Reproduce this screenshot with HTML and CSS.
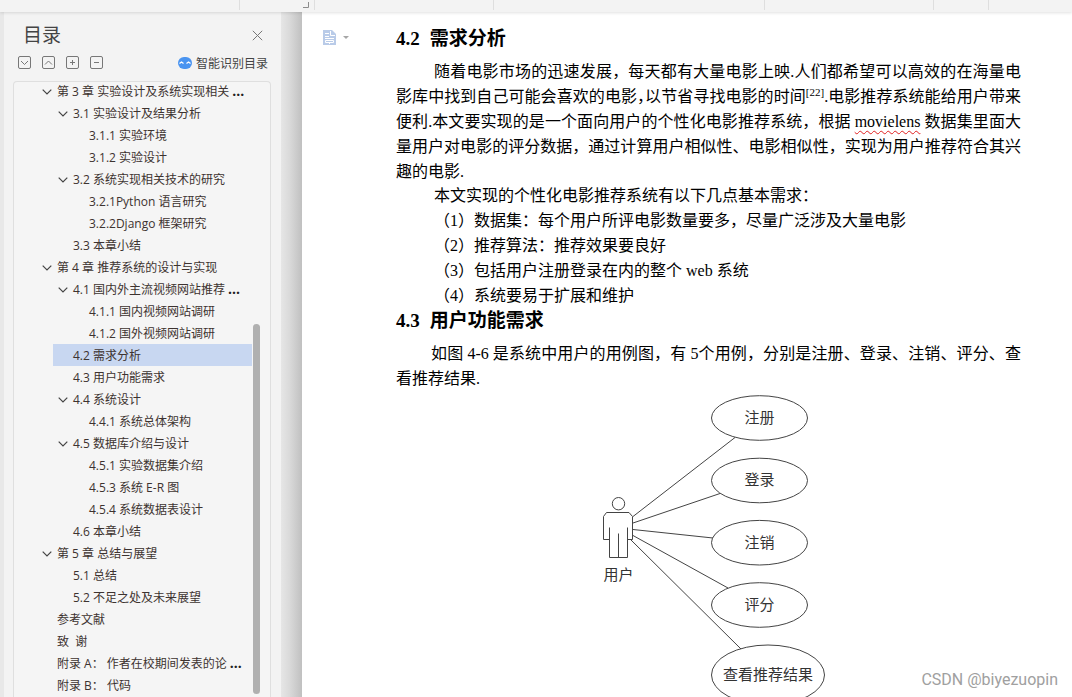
FILE: index.html
```html
<!DOCTYPE html>
<html lang="zh-CN">
<head>
<meta charset="utf-8">
<title>目录</title>
<link rel="stylesheet" href="styles.css">
</head>
<body>
<div class="app">
  <header class="topbar">
    <span class="seg seg-a"></span>
    <span class="seg seg-b"><svg width="7" height="7" viewBox="0 0 7 7"><path d="M5.5 0v5.5H0" fill="none" stroke="#8c8c8c"/></svg></span>
    <span class="seg seg-c"></span>
    <span class="seg seg-d"></span>
    <span class="seg seg-e"></span>
    <span class="seg seg-f"></span>
  </header>
  <div class="body">
    <aside class="sidebar">
      <div class="side-head">
        <h1 class="side-title">目录</h1>
        <button class="icon-btn" aria-label="关闭"><svg width="11" height="11" viewBox="0 0 11 11"><path d="M.8.8l9.4 9.4M10.2.8L.8 10.2" stroke="#777" fill="none"/></svg></button>
      </div>
      <div class="tools">
        <button class="icon-btn" aria-label="展开"><svg width="14" height="14" viewBox="0 0 14 14"><rect x=".5" y=".5" width="12" height="12" rx="1.5"/><path d="M3 5l3.500 3.500L10 5"/></svg></button>
        <button class="icon-btn" aria-label="收起"><svg width="14" height="14" viewBox="0 0 14 14"><rect x=".5" y=".5" width="12" height="12" rx="1.5"/><path d="M3 8.500L6.500 5 10 8.500"/></svg></button>
        <button class="icon-btn" aria-label="增加"><svg width="14" height="14" viewBox="0 0 14 14"><rect x=".5" y=".5" width="12" height="12" rx="1.5"/><path d="M4 6.5h5M6.5 4v5"/></svg></button>
        <button class="icon-btn" aria-label="减少"><svg width="14" height="14" viewBox="0 0 14 14"><rect x=".5" y=".5" width="12" height="12" rx="1.5"/><path d="M4 6.5h5"/></svg></button>
        <button class="smart"><svg width="14" height="12" viewBox="0 0 14 12"><rect width="14" height="12" rx="6" fill="#4a94f0"/><path d="M1.500 6.500L3.500 5 5.500 6.500M8.500 6.500l2-1.500 2 1.500" fill="none" stroke="#fff" stroke-width="1.300"/></svg><span class="smart-text">智能识别目录</span></button>
      </div>
      <nav class="tree">
        <ul class="list">
          <li class="row l1"><button class="fold" aria-label="折叠"><svg width="10" height="6" viewBox="0 0 10 6"><path d="M.7.7L5 5 9.300.7"/></svg></button><a href="#">第 3 章 实验设计及系统实现相关<b class="dots">...</b></a></li>
          <li class="row l2"><button class="fold" aria-label="折叠"><svg width="10" height="6" viewBox="0 0 10 6"><path d="M.7.7L5 5 9.300.7"/></svg></button><a href="#">3.1 实验设计及结果分析</a></li>
          <li class="row l3"><a href="#">3.1.1 实验环境</a></li>
          <li class="row l3"><a href="#">3.1.2 实验设计</a></li>
          <li class="row l2"><button class="fold" aria-label="折叠"><svg width="10" height="6" viewBox="0 0 10 6"><path d="M.7.7L5 5 9.300.7"/></svg></button><a href="#">3.2 系统实现相关技术的研究</a></li>
          <li class="row l3"><a href="#">3.2.1Python 语言研究</a></li>
          <li class="row l3"><a href="#">3.2.2Django 框架研究</a></li>
          <li class="row l2"><a href="#">3.3 本章小结</a></li>
          <li class="row l1"><button class="fold" aria-label="折叠"><svg width="10" height="6" viewBox="0 0 10 6"><path d="M.7.7L5 5 9.300.7"/></svg></button><a href="#">第 4 章 推荐系统的设计与实现</a></li>
          <li class="row l2"><button class="fold" aria-label="折叠"><svg width="10" height="6" viewBox="0 0 10 6"><path d="M.7.7L5 5 9.300.7"/></svg></button><a href="#">4.1 国内外主流视频网站推荐<b class="dots">...</b></a></li>
          <li class="row l3"><a href="#">4.1.1 国内视频网站调研</a></li>
          <li class="row l3"><a href="#">4.1.2 国外视频网站调研</a></li>
          <li class="row l2 selected"><a href="#">4.2 需求分析</a></li>
          <li class="row l2"><a href="#">4.3 用户功能需求</a></li>
          <li class="row l2"><button class="fold" aria-label="折叠"><svg width="10" height="6" viewBox="0 0 10 6"><path d="M.7.7L5 5 9.300.7"/></svg></button><a href="#">4.4 系统设计</a></li>
          <li class="row l3"><a href="#">4.4.1 系统总体架构</a></li>
          <li class="row l2"><button class="fold" aria-label="折叠"><svg width="10" height="6" viewBox="0 0 10 6"><path d="M.7.7L5 5 9.300.7"/></svg></button><a href="#">4.5 数据库介绍与设计</a></li>
          <li class="row l3"><a href="#">4.5.1 实验数据集介绍</a></li>
          <li class="row l3"><a href="#">4.5.3 系统 E-R 图</a></li>
          <li class="row l3"><a href="#">4.5.4 系统数据表设计</a></li>
          <li class="row l2"><a href="#">4.6 本章小结</a></li>
          <li class="row l1"><button class="fold" aria-label="折叠"><svg width="10" height="6" viewBox="0 0 10 6"><path d="M.7.7L5 5 9.300.7"/></svg></button><a href="#">第 5 章 总结与展望</a></li>
          <li class="row l2"><a href="#">5.1 总结</a></li>
          <li class="row l2"><a href="#">5.2 不足之处及未来展望</a></li>
          <li class="row l1"><a href="#">参考文献</a></li>
          <li class="row l1"><a href="#">致&nbsp; 谢</a></li>
          <li class="row l1"><a href="#">附录 A： 作者在校期间发表的论<b class="dots">...</b></a></li>
          <li class="row l1"><a href="#">附录 B： 代码</a></li>
        </ul>
        <div class="track"><div class="thumb"></div></div>
      </nav>
    </aside>
    <div class="edge"></div>
    <main class="page">
      <div class="gutter">
        <button class="icon-btn" aria-label="段落选项"><svg width="28" height="16" viewBox="0 0 28 16"><path d="M0 0h9l4 4v11H0z" fill="#b9cbe8"/><path d="M2 3.500h4M2 6.500h4M2 8.500h9M7.500 1v4.500H12M2.500 10.500h8v2h-8zM6.500 13v1" fill="none" stroke="#fff"/><path d="M20 6h6l-3 3z" fill="#a6a6a6"/></svg></button>
      </div>
      <article class="doc">
        <h2 class="head"><span class="num">4.2</span>需求分析</h2>
        <p class="para first">
          <span class="line full indent">随着电影市场的迅速发展，每天都有大量电影上映.人们都希望可以高效的在海量电</span>
          <span class="line full">影库中找到自己可能会喜欢的电影<span class="tight">，</span>以节省寻找电影的时间<sup class="cite">[22]</sup>.电影推荐系统能给用户带来</span>
          <span class="line full">便利.本文要实现的是一个面向用户的个性化电影推荐系统，根据 <span class="typo">movielens</span> 数据集里面大</span>
          <span class="line full">量用户对电影的评分数据，通过计算用户相似性、电影相似性，实现为用户推荐符合其兴</span>
          <span class="line">趣的电影.</span>
        </p>
        <p class="para">
          <span class="line indent">本文实现的个性化电影推荐系统有以下几点基本需求：</span>
          <span class="line indent">（1）数据集：每个用户所评电影数量要多，尽量广泛涉及大量电影</span>
          <span class="line indent">（2）推荐算法：推荐效果要良好</span>
          <span class="line indent">（3）包括用户注册登录在内的整个 web 系统</span>
          <span class="line indent">（4）系统要易于扩展和维护</span>
        </p>
        <h2 class="head"><span class="num">4.3</span>用户功能需求</h2>
        <p class="para">
          <span class="line full indent-s">如图 4-6 是系统中用户的用例图，有 5个用例，分别是注册、登录、注销、评分、查</span>
          <span class="line">看推荐结果.</span>
        </p>
        <figure class="figure">
          <svg class="usecase" width="226" height="320" viewBox="0 0 226 320">
            <g class="stroke">
              <ellipse cx="158.500" cy="27" rx="48" ry="22.300"/>
              <ellipse cx="158.500" cy="89.500" rx="48" ry="22.300"/>
              <ellipse cx="158.500" cy="151.700" rx="48" ry="22.300"/>
              <ellipse cx="158.500" cy="214" rx="48" ry="22.300"/>
              <ellipse cx="167" cy="284" rx="56.500" ry="30"/>
              <path d="M32 125.500L134 46.500M32 132L119 102.500M32 138.500L112 147M32 144.500L127 197M30 149L140 258"/>
              <circle cx="17.500" cy="112.700" r="6.200"/>
              <path d="M8.500 148.500h-6v-23l3-4h22.500l3.500 4v23h-5M8.500 136.500v30h18v-30M17.500 142.500v24"/>
            </g>
            <g class="label">
              <text x="158.500" y="32">注册</text>
              <text x="158.500" y="94">登录</text>
              <text x="158.500" y="157">注销</text>
              <text x="158.500" y="219">评分</text>
              <text x="167" y="289">查看推荐结果</text>
              <text x="17.500" y="189">用户</text>
            </g>
          </svg>
        </figure>
      </article>
    </main>
  </div>
  <div class="watermark">CSDN @biyezuopin</div>
</div>
</body>
</html>
```
FILE: styles.css
```css
* { box-sizing: border-box; }
body { margin: 0; background: #fff; }
button { border: 0; padding: 0; background: none; font: inherit; color: inherit; cursor: pointer; }
svg { display: block; }

.app {
  position: relative;
  display: flex;
  flex-direction: column;
  height: 100vh;
  overflow: hidden;
  font-family: "Open Sans", "Noto Sans CJK SC", sans-serif;
}

.topbar {
  flex: none;
  display: flex;
  height: 12px;
  background: #f3f3f3;
  box-shadow: 0 1px 3px rgba(0, 0, 0, 0.12);
  z-index: 1;
}
.seg { height: 10px; border-right: 1px solid #dedede; }
.seg-a { width: 240px; }
.seg-b { width: 75px; display: flex; justify-content: flex-end; padding: 2px 4px 0 0; }
.seg-c { width: 179px; }
.seg-d { width: 271px; }
.seg-e { width: 169px; }
.seg-f { width: 55px; }

.body { flex: 1; min-height: 0; display: flex; }

.sidebar {
  flex: none;
  width: 281px;
  display: flex;
  flex-direction: column;
  border-left: 4px solid #e8e8e8;
  background: #f3f3f3;
  color: #444;
}
.side-head {
  display: flex;
  align-items: center;
  justify-content: space-between;
  height: 44px;
  padding: 2px 18px 0 19px;
}
.side-title { margin: 0; font-size: 19px; line-height: 28px; font-weight: 400; }
.icon-btn { display: block; }
.tools {
  display: flex;
  align-items: center;
  gap: 10px;
  height: 14px;
  padding: 0 13px 0 14px;
}
.tools .icon-btn svg { fill: none; stroke: #777; }
.smart {
  display: flex;
  align-items: center;
  gap: 4px;
  margin-left: auto;
  font-size: 12px;
  line-height: 14px;
}
.smart-text { padding-top: 2px; }

.tree {
  flex: 1;
  min-height: 0;
  display: flex;
  margin: 11px 10px 0 9px;
  border: 1px solid #dfdfdf;
  border-bottom: 0;
  border-radius: 4px 4px 0 0;
  background: #f5f5f5;
  overflow: hidden;
}
.list { flex: 1; margin: -2px 0 0; padding: 0; list-style: none; }
.row {
  display: flex;
  align-items: center;
  height: 22px;
  padding: 2px 0 0 20px;
  font-size: 12px;
  line-height: 20px;
  color: #3d3330;
  white-space: nowrap;
}
.row a { color: inherit; text-decoration: none; }
.l1 { margin-left: 23px; }
.l2 { margin-left: 39px; }
.l3 { margin-left: 55px; }
.selected { background: #c8d7f1; }
.fold { width: 20px; margin-left: -20px; display: flex; justify-content: center; }
.fold svg { fill: none; stroke: #444; stroke-width: 1.2; }
.dots { margin-left: 3px; font-size: 14px; line-height: 14px; color: #222; }
.track { flex: none; width: 18px; padding: 242px 10px 3px 1px; }
.thumb { height: 100%; border-radius: 4px; background: #b0b0b0; }

.edge { flex: none; width: 21px; background: linear-gradient(90deg, #e6e6e6, #dadada 40%, #c0c0c0); }

.page {
  flex: 1;
  min-width: 0;
  display: grid;
  grid-template-columns: 94px 1fr;
  padding: 14px 51px 0 0;
  overflow: hidden;
  background: #fff;
  color: #000;
}
.gutter { padding: 4px 0 0 21px; }
.doc {
  min-width: 0;
  font-family: "Liberation Serif", "Noto Sans CJK SC", serif;
  font-size: 16px;
  line-height: 25px;
}
.head { margin: 0 0 8px; font-size: 19px; line-height: 25px; font-weight: 700; }
.num { margin-right: 10px; }
.para { margin: 0; }
.first { margin-bottom: -1px; }
.line { display: block; height: 25px; white-space: nowrap; }
.full { text-align: justify; text-align-last: justify; white-space: normal; }
.indent { padding-left: 38px; }
.indent-s { padding-left: 35px; }
.tight { font-feature-settings: "halt"; }
.cite { font-size: 11px; line-height: 11px; }
.typo { text-decoration: underline wavy #e02020 1px; text-underline-offset: 3px; }

.figure { margin: 0; padding-left: 205px; }
.stroke { fill: none; stroke: #444; stroke-width: 1; }
.label { font-family: "Noto Sans CJK SC", sans-serif; font-size: 15px; fill: #333; text-anchor: middle; }

.watermark {
  position: absolute;
  right: 14px;
  bottom: 7px;
  font-family: Roboto, sans-serif;
  font-size: 16px;
  line-height: 20px;
  color: #a0a0a0;
}
```
